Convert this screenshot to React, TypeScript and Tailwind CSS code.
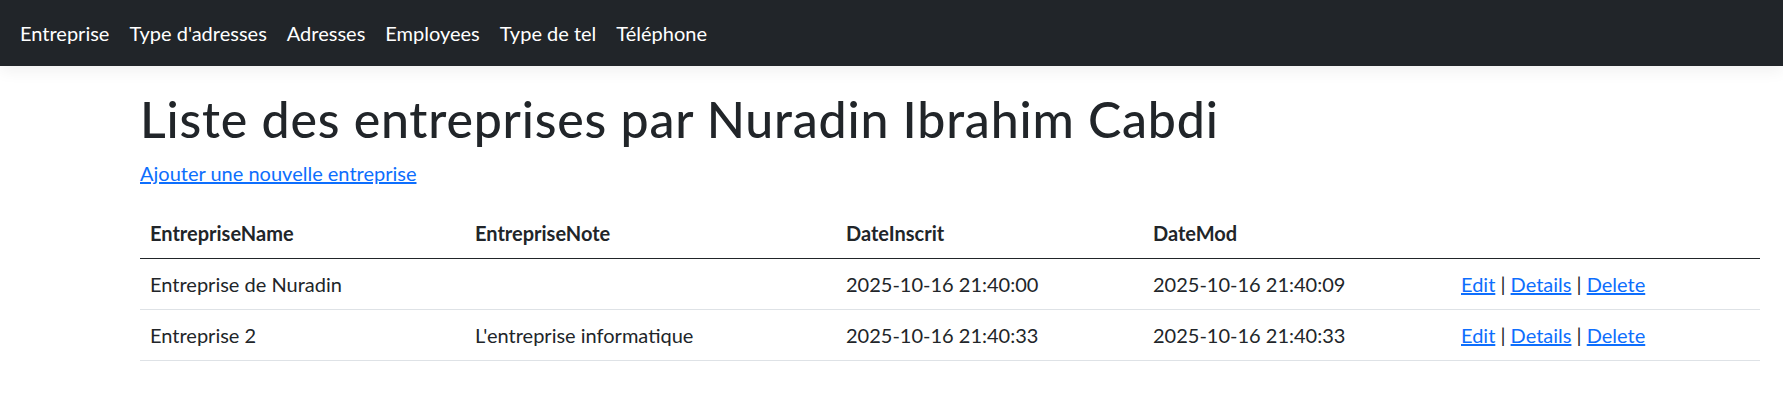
import React from "react";

const navItems = [
  "Entreprise",
  "Type d'adresses",
  "Adresses",
  "Employees",
  "Type de tel",
  "Téléphone"
];

const rows = [
  {
    name: "Entreprise de Nuradin",
    note: "",
    inscrit: "2025-10-16 21:40:00",
    mod: "2025-10-16 21:40:09"
  },
  {
    name: "Entreprise 2",
    note: "L'entreprise informatique",
    inscrit: "2025-10-16 21:40:33",
    mod: "2025-10-16 21:40:33"
  }
];

const font = "font-['Segoe_UI',Lato,'Liberation_Sans',sans-serif]";

const App = () => {
  return (
    <div className={`min-h-[415px] bg-white text-[#212529] text-[20px] leading-[30px] ${font}`}>
      {/* navbar */}
      <nav className="h-[66px] bg-[#212529] shadow-[0_5px_15px_rgba(0,0,0,0.06)] flex items-center px-[10px]">
        <ul className="flex">
          {navItems.map((item) => (
            <li key={item}>
              <a href="#" className="block px-[10px] text-white">
                {item}
              </a>
            </li>
          ))}
        </ul>
      </nav>

      {/* content */}
      <main className="pl-[140px] pr-[23px] pt-[23px]">
        <h1 className="text-[50px] leading-[60px] font-medium tracking-[0.8px] mb-[9px]">
          Liste des entreprises par Nuradin Ibrahim Cabdi
        </h1>
        <p className="mb-[20px]">
          <a href="#" className="text-[#0d6efd] underline">
            Ajouter une nouvelle entreprise
          </a>
        </p>
        <table className="w-full border-collapse text-left">
          <thead>
            <tr className="border-b border-[#212529]">
              <th className="w-[325px] p-[10px] font-bold">EntrepriseName</th>
              <th className="w-[371px] p-[10px] font-bold">EntrepriseNote</th>
              <th className="w-[307px] p-[10px] font-bold">DateInscrit</th>
              <th className="w-[308px] p-[10px] font-bold">DateMod</th>
              <th className="p-[10px]"></th>
            </tr>
          </thead>
          <tbody>
            {rows.map((r) => (
              <tr key={r.name} className="border-b border-[#dee2e6]">
                <td className="p-[10px]">{r.name}</td>
                <td className="p-[10px]">{r.note}</td>
                <td className="p-[10px]">{r.inscrit}</td>
                <td className="p-[10px]">{r.mod}</td>
                <td className="p-[10px]">
                  <a href="#" className="text-[#0d6efd] underline">Edit</a> |{" "}
                  <a href="#" className="text-[#0d6efd] underline">Details</a> |{" "}
                  <a href="#" className="text-[#0d6efd] underline">Delete</a>
                </td>
              </tr>
            ))}
          </tbody>
        </table>
      </main>
    </div>
  );
};

export default App;
